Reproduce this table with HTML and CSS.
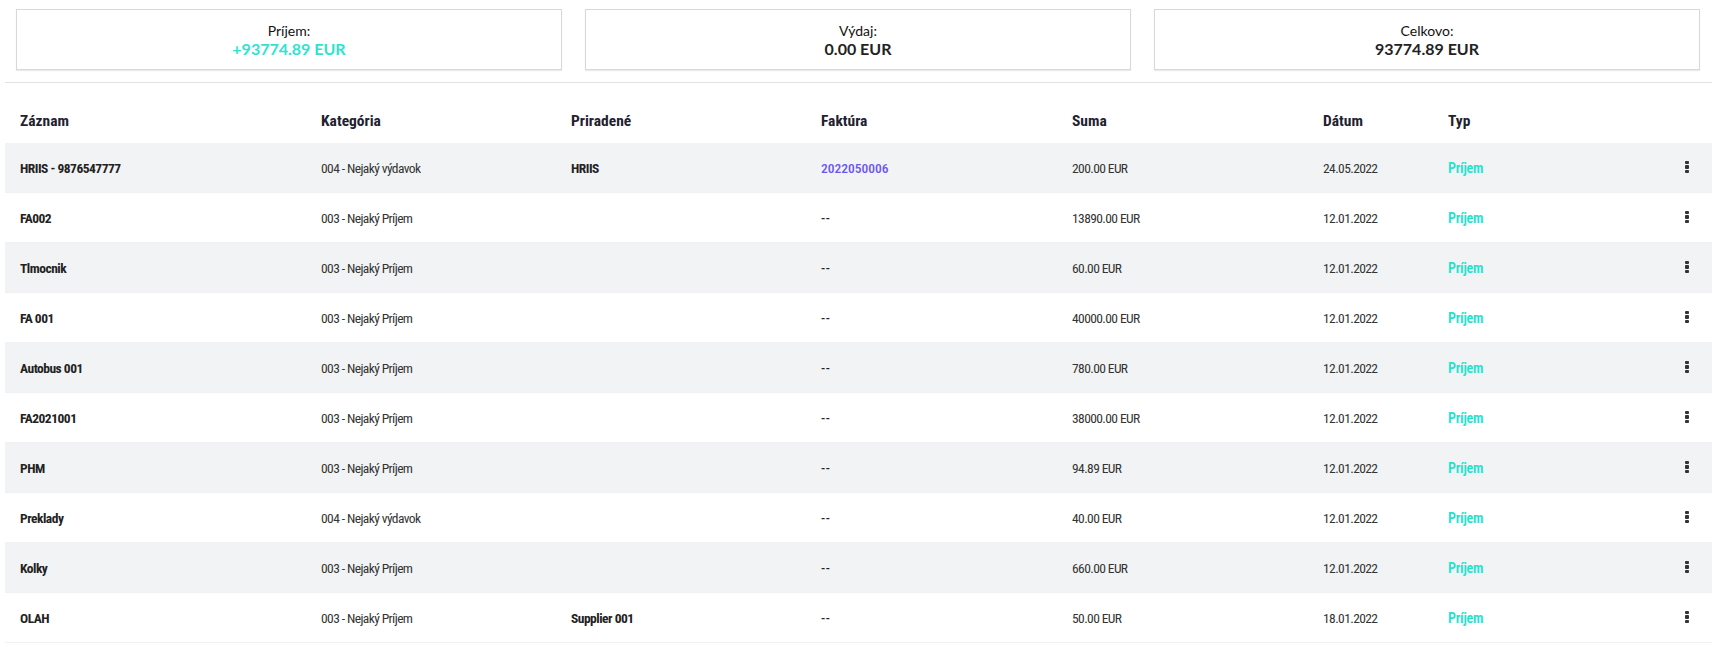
FILE: index.html
```html
<!DOCTYPE html>
<html lang="sk">
<head>
<meta charset="utf-8">
<title>Prehľad</title>
<link rel="stylesheet" href="styles.css">
</head>
<body>
<div class="page">
  <div class="summary">
    <div class="card">
      <div class="card-label">Príjem:</div>
      <div class="card-value income">+93774.89 EUR</div>
    </div>
    <div class="card">
      <div class="card-label">Výdaj:</div>
      <div class="card-value">0.00 EUR</div>
    </div>
    <div class="card">
      <div class="card-label">Celkovo:</div>
      <div class="card-value">93774.89 EUR</div>
    </div>
  </div>
  <div class="divider"></div>
  <table class="records">
    <colgroup>
      <col class="c-name"><col class="c-cat"><col class="c-assigned"><col class="c-invoice"><col class="c-sum"><col class="c-date"><col class="c-type">
    </colgroup>
    <thead>
      <tr><th>Záznam</th><th>Kategória</th><th>Priradené</th><th>Faktúra</th><th>Suma</th><th>Dátum</th><th>Typ</th></tr>
    </thead>
    <tbody>
      <tr><td class="name">HRIIS - 9876547777</td><td>004 - Nejaký výdavok</td><td class="name">HRIIS</td><td><a class="invoice" href="#">2022050006</a></td><td>200.00 EUR</td><td>24.05.2022</td><td class="type"><span>Príjem</span><span class="kebab"><i></i><i></i><i></i></span></td></tr>
      <tr><td class="name">FA002</td><td>003 - Nejaký Príjem</td><td></td><td class="empty">--</td><td>13890.00 EUR</td><td>12.01.2022</td><td class="type"><span>Príjem</span><span class="kebab"><i></i><i></i><i></i></span></td></tr>
      <tr><td class="name">Tlmocnik</td><td>003 - Nejaký Príjem</td><td></td><td class="empty">--</td><td>60.00 EUR</td><td>12.01.2022</td><td class="type"><span>Príjem</span><span class="kebab"><i></i><i></i><i></i></span></td></tr>
      <tr><td class="name">FA 001</td><td>003 - Nejaký Príjem</td><td></td><td class="empty">--</td><td>40000.00 EUR</td><td>12.01.2022</td><td class="type"><span>Príjem</span><span class="kebab"><i></i><i></i><i></i></span></td></tr>
      <tr><td class="name">Autobus 001</td><td>003 - Nejaký Príjem</td><td></td><td class="empty">--</td><td>780.00 EUR</td><td>12.01.2022</td><td class="type"><span>Príjem</span><span class="kebab"><i></i><i></i><i></i></span></td></tr>
      <tr><td class="name">FA2021001</td><td>003 - Nejaký Príjem</td><td></td><td class="empty">--</td><td>38000.00 EUR</td><td>12.01.2022</td><td class="type"><span>Príjem</span><span class="kebab"><i></i><i></i><i></i></span></td></tr>
      <tr><td class="name">PHM</td><td>003 - Nejaký Príjem</td><td></td><td class="empty">--</td><td>94.89 EUR</td><td>12.01.2022</td><td class="type"><span>Príjem</span><span class="kebab"><i></i><i></i><i></i></span></td></tr>
      <tr><td class="name">Preklady</td><td>004 - Nejaký výdavok</td><td></td><td class="empty">--</td><td>40.00 EUR</td><td>12.01.2022</td><td class="type"><span>Príjem</span><span class="kebab"><i></i><i></i><i></i></span></td></tr>
      <tr><td class="name">Kolky</td><td>003 - Nejaký Príjem</td><td></td><td class="empty">--</td><td>660.00 EUR</td><td>12.01.2022</td><td class="type"><span>Príjem</span><span class="kebab"><i></i><i></i><i></i></span></td></tr>
      <tr><td class="name">OLAH</td><td>003 - Nejaký Príjem</td><td class="name">Supplier 001</td><td class="empty">--</td><td>50.00 EUR</td><td>18.01.2022</td><td class="type"><span>Príjem</span><span class="kebab"><i></i><i></i><i></i></span></td></tr>
    </tbody>
  </table>
</div>
</body>
</html>
```
FILE: styles.css
```css
html, body {
  margin: 0;
  padding: 0;
  background: #ffffff;
}

.page {
  padding: 0 8px 0 5px;
}

.summary {
  display: grid;
  grid-template-columns: repeat(3, 1fr);
  column-gap: 23px;
  padding: 9px 12px 0 11px;
}

.card {
  height: 61px;
  box-sizing: border-box;
  border: 1px solid #d8d8d8;
  box-shadow: 0 1px 1px rgba(0, 0, 0, 0.08);
  display: flex;
  flex-direction: column;
  align-items: center;
  justify-content: center;
  font-family: Lato, "Open Sans", sans-serif;
  color: #222;
}

.card-label {
  font-size: 14px;
  line-height: 18px;
  color: #111;
}

.card-value {
  font-size: 16px;
  line-height: 18px;
  font-weight: 700;
}

.card-value.income {
  color: #2ee4cf;
}

.divider {
  height: 1px;
  background: #e2e2e2;
  margin-top: 12px;
}

.records {
  width: 100%;
  border-collapse: collapse;
  table-layout: fixed;
  font-family: Roboto, "DejaVu Sans Condensed", sans-serif;
  font-stretch: 75%;
  color: #333;
}

.c-name { width: 301px; }
.c-cat { width: 250px; }
.c-assigned { width: 250px; }
.c-invoice { width: 251px; }
.c-sum { width: 251px; }
.c-date { width: 125px; }
.c-type { width: auto; }

.records th {
  height: 60px;
  box-sizing: border-box;
  padding: 26px 0 10px 15px;
  line-height: 24px;
  text-align: left;
  font-size: 15.5px;
  font-weight: 700;
  color: #1f2230;
  vertical-align: middle;
}

.records td {
  height: 49px;
  padding: 0 0 0 15px;
  font-size: 13.5px;
  font-weight: 400;
  letter-spacing: -0.6px;
  vertical-align: middle;
  white-space: nowrap;
}

.records tbody tr {
  border-bottom: 1px solid #f1f1f3;
}

.records tbody tr:nth-child(odd) {
  background: #f2f3f5;
}

.records td.name {
  font-weight: 700;
  font-size: 13.5px;
  letter-spacing: -0.5px;
  color: #222;
}

.records td.empty {
  letter-spacing: 0.5px;
  font-weight: 500;
  color: #222;
}

.invoice {
  color: #6a55f5;
  font-weight: 500;
  text-decoration: none;
  letter-spacing: 0;
}

.records td.type {
  padding-right: 23px;
  letter-spacing: -0.2px;
}

.type {
  color: #22e2cc;
}

.records td.type span:first-child {
  display: inline-block;
  font-size: 14px;
  font-weight: 600;
}

.type .kebab {
  float: right;
  display: flex;
  flex-direction: column;
  gap: 1px;
  margin-top: 1px;
}

.kebab i {
  display: block;
  width: 4px;
  height: 3.5px;
  background: #333;
  border-radius: 1px;
}
```
